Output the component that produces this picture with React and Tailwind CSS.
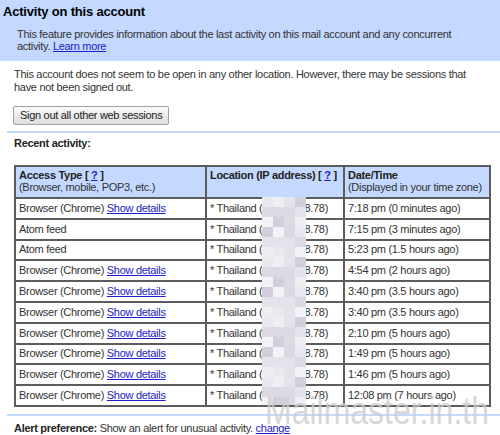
import React from "react";

const rows = [
  { type: "Browser (Chrome)", details: true, time: "7:18 pm (0 minutes ago)" },
  { type: "Atom feed", details: false, time: "7:15 pm (3 minutes ago)" },
  { type: "Atom feed", details: false, time: "5:23 pm (1.5 hours ago)" },
  { type: "Browser (Chrome)", details: true, time: "4:54 pm (2 hours ago)" },
  { type: "Browser (Chrome)", details: true, time: "3:40 pm (3.5 hours ago)" },
  { type: "Browser (Chrome)", details: true, time: "3:40 pm (3.5 hours ago)" },
  { type: "Browser (Chrome)", details: true, time: "2:10 pm (5 hours ago)" },
  { type: "Browser (Chrome)", details: true, time: "1:49 pm (5 hours ago)" },
  { type: "Browser (Chrome)", details: true, time: "1:46 pm (5 hours ago)" },
  { type: "Browser (Chrome)", details: true, time: "12:08 pm (7 hours ago)" },
];

// pixelated blur over the IP addresses
const shades = ["#e9e8ee", "#dcd8e4", "#f3f2f6", "#d2cedc", "#e4e2ea", "#efeef2"];
const mosaic = [];
for (let r = 0; r < 21; r++) {
  for (let c = 0; c < 4; c++) {
    mosaic.push(shades[(r * 7 + c * 5 + ((r * c) % 3)) % shades.length]);
  }
}

const Link = ({ children }) => (
  <span className="text-[#2020c8] underline">{children}</span>
);

const cell = "border-2 border-[#5c5c5c] px-[3px] whitespace-nowrap";

export default function App() {
  return (
    <div className="relative w-[500px] h-[435px] overflow-hidden bg-white text-[11px] leading-[13px] tracking-[-0.3px] text-[#222] font-['Liberation_Sans',Arial,sans-serif]">
      <div className="bg-[#c3d9ff] h-[61px] pt-[4px]">
        <div className="pl-[3px] text-[13px] leading-[16px] tracking-[-0.2px] font-bold text-black">Activity on this account</div>
        <div className="pl-[17px] pt-[8px] pr-[30px] leading-[12px] text-[#333]">
          This feature provides information about the last activity on this mail account and any concurrent activity. <Link>Learn more</Link>
        </div>
      </div>

      <div className="pl-[14px] pr-[30px] pt-[7px] text-[#333]">
        This account does not seem to be open in any other location. However, there may be sessions that have not been signed out.
      </div>

      <div className="pl-[13px] pt-[12px]">
        <div className="inline-block h-[19px] px-[6px] leading-[17px] border border-[#a0a0a0] rounded-[2px] bg-gradient-to-b from-[#fafafa] to-[#dedede] text-[#222]">
          Sign out all other web sessions
        </div>
      </div>

      <div className="ml-[7px] mt-[6px] h-[2px] bg-[#c3d9ff]" />

      <div className="pl-[14px] pt-[4px] font-bold text-[#222]">Recent activity:</div>

      <div className="relative ml-[14px] mt-[15px] w-[475px]">
        <table className="w-[475px] border-collapse table-fixed text-[#333]">
          <colgroup>
            <col className="w-[191px]" />
            <col className="w-[138px]" />
            <col className="w-[146px]" />
          </colgroup>
          <thead>
            <tr className="bg-[#c3d9ff] h-[32px] align-top leading-[12px]">
              <th className={`${cell} text-left font-normal pt-[2px]`}>
                <div className="font-bold text-[#222]">Access Type [ <Link>?</Link> ]</div>
                <div>(Browser, mobile, POP3, etc.)</div>
              </th>
              <th className={`${cell} text-left font-normal pt-[2px]`}>
                <div className="font-bold text-[#222]">Location (IP address) [ <Link>?</Link> ]</div>
              </th>
              <th className={`${cell} text-left font-normal pt-[2px]`}>
                <div className="font-bold text-[#222]">Date/Time</div>
                <div>(Displayed in your time zone)</div>
              </th>
            </tr>
          </thead>
          <tbody>
            {rows.map((row, i) => (
              <tr key={i} className="h-[20.8px]">
                <td className={cell}>
                  {row.type} {row.details && <Link>Show details</Link>}
                </td>
                <td className={cell}>
                  * Thailand (<span className="inline-block w-[42px]" />8.78)
                </td>
                <td className={cell}>{row.time}</td>
              </tr>
            ))}
          </tbody>
        </table>
        <div className="absolute left-[248px] top-[32px] w-[44px] h-[208px] grid grid-cols-4 overflow-hidden">
          {mosaic.map((c, i) => (
            <div key={i} className="h-[10px]" style={{ background: c }} />
          ))}
        </div>
      </div>

      <div className="ml-[7px] mt-[7px] h-[2px] bg-[#c3d9ff]" />

      <div className="pl-[14px] pt-[6px] text-[#333]">
        <span className="font-bold text-[#222]">Alert preference:</span> Show an alert for unusual activity. <Link>change</Link>
      </div>

      <div className="absolute left-[265px] top-[389px] origin-left scale-x-[0.82] text-[39px] leading-[44px] tracking-[0px] text-[#cdcdcd]/80 font-['Liberation_Sans',sans-serif] pointer-events-none whitespace-nowrap">
        Mailmaster.in.th
      </div>
    </div>
  );
}
